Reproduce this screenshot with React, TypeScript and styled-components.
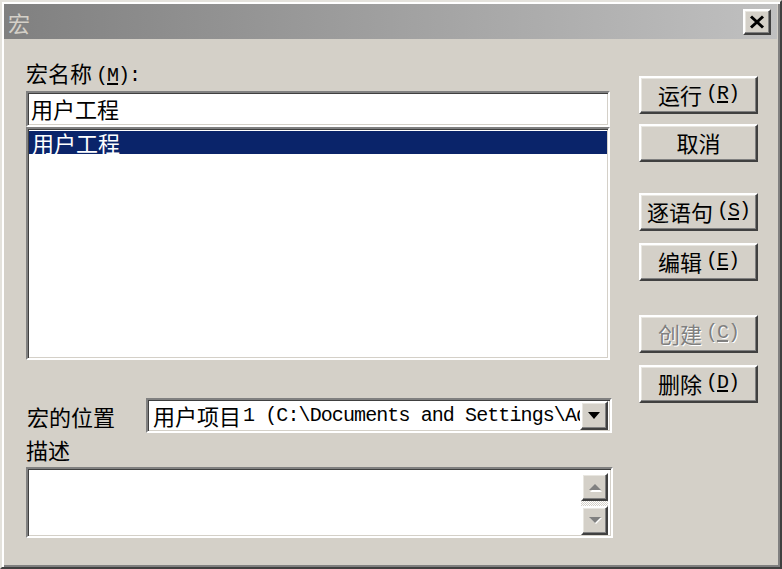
import React from "react";
import styled, { createGlobalStyle, css } from "styled-components";

const CJK = `"Noto Sans CJK SC", "Noto Sans CJK JP", sans-serif`;
const MONO = `"Liberation Mono", "Noto Sans CJK SC", monospace`;

const GlobalStyle = createGlobalStyle`
  html, body { margin: 0; padding: 0; background: #d4d0c8; }
  body { width: 782px; height: 569px; overflow: hidden; font-family: ${CJK}; }
  * { box-sizing: border-box; }
`;

const raised = css`
  border: 2px solid;
  border-color: #ffffff #404040 #404040 #ffffff;
  box-shadow: inset -1px -1px #808080, inset 1px 1px #e8e6e0;
  background: #d4d0c8;
`;

const sunken = css`
  border: 2px solid;
  border-color: #808080 #ffffff #ffffff #808080;
  box-shadow: inset 1px 1px #404040, inset -1px -1px #d4d0c8;
  background: #ffffff;
`;

const Window = styled.div`
  width: 782px;
  height: 569px;
  display: flex;
  flex-direction: column;
  background: #d4d0c8;
  border: 2px solid;
  border-color: #e4e2dc #404040 #404040 #e4e2dc;
  box-shadow: inset 2px 2px #ffffff, inset -2px -2px #808080;
  padding: 2px 3px 4px 2px;
`;

const TitleBar = styled.div`
  flex: none;
  height: 35px;
  display: flex;
  align-items: center;
  justify-content: space-between;
  padding: 0 6px 0 4px;
  background: linear-gradient(to right, #808080, #c0c0c0);
`;

const TitleText = styled.span`
  font-family: ${CJK};
  font-size: 22px;
  line-height: 24px;
  color: #d4d0c8;
`;

const CloseButton = styled.div`
  ${raised};
  width: 28px;
  height: 26px;
  display: flex;
  align-items: center;
  justify-content: center;
`;

const Body = styled.div`
  flex: 1;
  display: flex;
  gap: 26px;
  padding: 21px 0 0 22px;
`;

const LeftCol = styled.div`
  width: 587px;
  display: flex;
  flex-direction: column;
`;

const RightCol = styled.div`
  display: flex;
  flex-direction: column;
  padding-top: 16px;
`;

const Label = styled.div<{ $top?: number }>`
  height: 24px;
  margin-top: ${(p) => p.$top ?? 0}px;
  font-family: ${CJK};
  font-size: 22px;
  line-height: 24px;
  color: #000;
  white-space: nowrap;
`;

const Key = styled.span`
  font-family: ${MONO};
  font-size: 20px;
  letter-spacing: -1px;
  margin-left: 4px;
  vertical-align: 1px;
  u {
    text-decoration: underline;
    text-underline-offset: 2px;
  }
`;

const NameInput = styled.div`
  ${sunken};
  width: 584px;
  height: 36px;
  margin-top: 7px;
  padding: 0 3px;
  font-family: ${CJK};
  font-size: 22px;
  line-height: 30px;
  color: #000;
`;

const ListBox = styled.div`
  ${sunken};
  width: 584px;
  height: 233px;
  padding: 2px 1px 1px 1px;
`;

const ListRow = styled.div<{ $selected?: boolean }>`
  height: 23px;
  padding-left: 3px;
  font-family: ${CJK};
  font-size: 22px;
  line-height: 23px;
  color: ${(p) => (p.$selected ? "#ffffff" : "#000000")};
  background: ${(p) => (p.$selected ? "#0a246a" : "transparent")};
`;

const LocationRow = styled.div`
  display: flex;
  align-items: center;
  margin-top: 38px;
  height: 35px;
`;

const LocationLabel = styled(Label)`
  width: 120px;
  padding-left: 1px;
`;

const Combo = styled.div`
  ${sunken};
  width: 466px;
  height: 35px;
  display: flex;
  align-items: stretch;
  padding: 1px 2px 1px 2px;
`;

const ComboText = styled.div`
  flex: 1;
  overflow: hidden;
  white-space: nowrap;
  padding-left: 3px;
  display: flex;
  align-items: center;
  color: #000;
`;

const ComboCJK = styled.span`
  font-family: ${CJK};
  font-size: 22px;
  line-height: 27px;
`;

const ComboMono = styled.span`
  font-family: ${MONO};
  font-size: 20px;
  letter-spacing: -0.9px;
  line-height: 27px;
  margin-left: 2px;
`;

const DropButton = styled.div`
  ${raised};
  flex: none;
  width: 28px;
  display: flex;
  align-items: center;
  justify-content: center;
`;

const DescBox = styled.div`
  ${sunken};
  width: 587px;
  height: 71px;
  margin-top: 6px;
  display: flex;
  justify-content: flex-end;
  padding: 4px 3px 1px 0;
`;

const ScrollCol = styled.div`
  width: 27px;
  display: flex;
  flex-direction: column;
  gap: 5px;
  background: repeating-conic-gradient(#ffffff 0 25%, #d4d0c8 0 50%) 0 0 / 2px 2px;
`;

const ScrollButton = styled.div<{ $h: number }>`
  ${raised};
  height: ${(p) => p.$h}px;
  display: flex;
  align-items: center;
  justify-content: center;
`;

const Button = styled.button<{ $top: number; $disabled?: boolean }>`
  ${raised};
  width: 119px;
  height: 38px;
  margin: ${(p) => p.$top}px 0 0 0;
  padding: 0 0 2px 0;
  display: flex;
  align-items: center;
  justify-content: center;
  font-family: ${CJK};
  font-size: 22px;
  line-height: 24px;
  color: ${(p) => (p.$disabled ? "#808080" : "#000000")};
  text-shadow: ${(p) => (p.$disabled ? "1px 1px #ffffff" : "none")};
  cursor: default;
`;

const CloseIcon = () => (
  <svg width="16" height="14" viewBox="0 0 16 14">
    <path d="M2 1.5 L14 12.5 M14 1.5 L2 12.5" stroke="#000" strokeWidth="3" strokeLinecap="butt" />
  </svg>
);

const DownTriangle = () => (
  <svg width="12" height="7" viewBox="0 0 12 7">
    <polygon points="0,0 12,0 6,7" fill="#000" />
  </svg>
);

const GreyArrow = ({ up }: { up?: boolean }) => (
  <svg width="14" height="9" viewBox="0 0 14 9">
    {up ? (
      <>
        <polygon points="1,8 13,8 7,2" fill="#ffffff" transform="translate(1,1)" />
        <polygon points="1,7 13,7 7,1" fill="#808080" />
      </>
    ) : (
      <>
        <polygon points="1,1 13,1 7,7" fill="#ffffff" transform="translate(1,1)" />
        <polygon points="1,1 13,1 7,7" fill="#808080" />
      </>
    )}
  </svg>
);

const buttons: { label: string; key?: string; top: number; disabled?: boolean }[] = [
  { label: "运行", key: "R", top: 0 },
  { label: "取消", top: 10 },
  { label: "逐语句", key: "S", top: 31 },
  { label: "编辑", key: "E", top: 12 },
  { label: "创建", key: "C", top: 34, disabled: true },
  { label: "删除", key: "D", top: 12 },
];

export default function App() {
  return (
    <>
      <GlobalStyle />
      <Window>
        <TitleBar>
          <TitleText>宏</TitleText>
          <CloseButton>
            <CloseIcon />
          </CloseButton>
        </TitleBar>
        <Body>
          <LeftCol>
            <Label>
              宏名称
              <Key>
                (<u>M</u>):
              </Key>
            </Label>
            <NameInput>用户工程</NameInput>
            <ListBox>
              <ListRow $selected>用户工程</ListRow>
            </ListBox>
            <LocationRow>
              <LocationLabel>宏的位置</LocationLabel>
              <Combo>
                <ComboText>
                  <ComboCJK>用户项目</ComboCJK>
                  <ComboMono>1 (C:\Documents and Settings\Administrator)</ComboMono>
                </ComboText>
                <DropButton>
                  <DownTriangle />
                </DropButton>
              </Combo>
            </LocationRow>
            <Label $top={4}>描述</Label>
            <DescBox>
              <ScrollCol>
                <ScrollButton $h={28}>
                  <GreyArrow up />
                </ScrollButton>
                <ScrollButton $h={29}>
                  <GreyArrow />
                </ScrollButton>
              </ScrollCol>
            </DescBox>
          </LeftCol>
          <RightCol>
            {buttons.map((b) => (
              <Button key={b.label} type="button" $top={b.top} $disabled={b.disabled}>
                {b.label}
                {b.key && (
                  <Key>
                    (<u>{b.key}</u>)
                  </Key>
                )}
              </Button>
            ))}
          </RightCol>
        </Body>
      </Window>
    </>
  );
}
